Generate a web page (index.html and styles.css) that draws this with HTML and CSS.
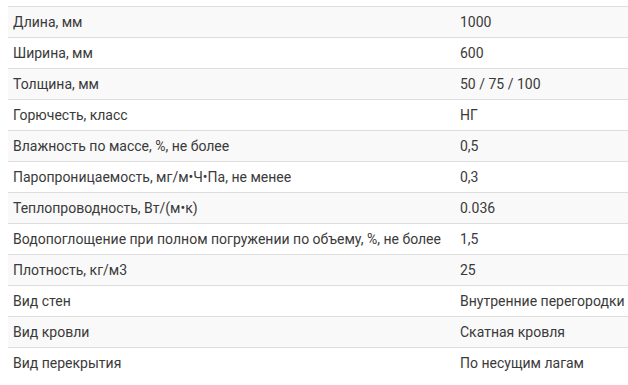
FILE: index.html
```html
<!DOCTYPE html>
<html lang="ru">
<head>
<meta charset="utf-8">
<link rel="stylesheet" href="styles.css">
</head>
<body>
<table class="specs">
  <tbody>
    <tr><td class="name">Длина, мм</td><td class="val">1000</td></tr>
    <tr><td class="name">Ширина, мм</td><td class="val">600</td></tr>
    <tr><td class="name">Толщина, мм</td><td class="val">50 / 75 / 100</td></tr>
    <tr><td class="name">Горючесть, класс</td><td class="val">НГ</td></tr>
    <tr><td class="name">Влажность по массе, %, не более</td><td class="val">0,5</td></tr>
    <tr><td class="name">Паропроницаемость, мг/м•Ч•Па, не менее</td><td class="val">0,3</td></tr>
    <tr><td class="name">Теплопроводность, Вт/(м•к)</td><td class="val">0.036</td></tr>
    <tr><td class="name">Водопоглощение при полном погружении по объему, %, не более</td><td class="val">1,5</td></tr>
    <tr><td class="name">Плотность, кг/м3</td><td class="val">25</td></tr>
    <tr><td class="name">Вид стен</td><td class="val">Внутренние перегородки</td></tr>
    <tr><td class="name">Вид кровли</td><td class="val">Скатная кровля</td></tr>
    <tr><td class="name">Вид перекрытия</td><td class="val">По несущим лагам</td></tr>
  </tbody>
</table>
</body>
</html>
```
FILE: styles.css
```css
html, body {
  margin: 0;
  padding: 0;
  background: #fff;
}
body {
  padding: 6px 0 0 8px;
  font-family: Roboto, "Noto Sans", sans-serif;
  font-size: 14px;
  color: #3a3a3a;
}
.specs {
  border-collapse: collapse;
  width: 630px;
}
.specs td {
  border-top: 1px solid #ddd;
  padding: 5px 5px;
  line-height: 20px;
  vertical-align: top;
  white-space: nowrap;
}
.specs .name {
  width: 437px;
}
.specs tr:nth-child(odd) td {
  background: #f9f9f9;
}
```
